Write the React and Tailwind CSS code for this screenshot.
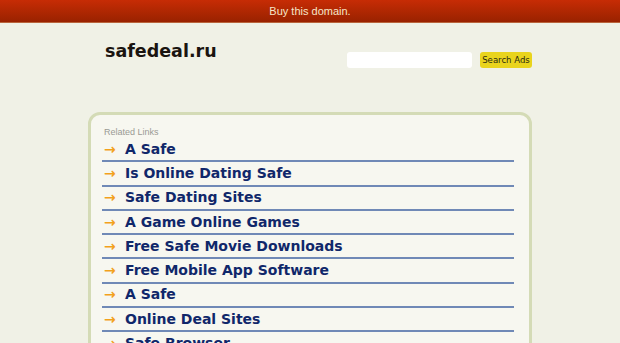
const links = [
  "A Safe",
  "Is Online Dating Safe",
  "Safe Dating Sites",
  "A Game Online Games",
  "Free Safe Movie Downloads",
  "Free Mobile App Software",
  "A Safe",
  "Online Deal Sites",
  "Safe Browser",
];

function App() {
  return (
    <div className="bg-[#f0f1e6] overflow-hidden h-[343px]">
      <div className="h-[23px] bg-gradient-to-b from-[#c72c05] to-[#992200] border-b border-[#b9653c] flex items-center justify-center">
        <span className="text-[11px] text-[#f6e6c8] font-['Liberation_Sans',sans-serif]">
          Buy this domain.
        </span>
      </div>

      <div className="w-[444px] mx-auto">
        <div className="flex items-start justify-between pl-[17px] pt-[16px] h-[89px]">
          <div className="text-[17.5px] font-bold text-[#1a1410] font-['DejaVu_Sans',sans-serif] leading-[24px]">
            safedeal.ru
          </div>
          <div className="flex items-center gap-[8px] mt-[13px]">
            <div className="w-[125px] h-[16px] bg-white rounded-[3px]"></div>
            <div className="w-[52px] h-[16px] bg-[#e9d41d] rounded-[3px] flex items-center justify-center text-[9.5px] text-[#2a2a10] font-['DejaVu_Sans_Condensed','DejaVu_Sans',sans-serif]">
              Search Ads
            </div>
          </div>
        </div>

        <div className="border-[3px] border-[#d4dbb6] rounded-[12px] bg-[#f7f7f0] pl-[11px] pr-[15px] pt-[11px] h-[260px]">
          <div className="text-[9px] text-[#9a9a94] pl-[2px] font-['Liberation_Sans',sans-serif] leading-[12px]">
            Related Links
          </div>
          {links.map((l, i) => (
            <div
              key={i}
              className="h-[24.3px] border-b-2 border-[#7089b6] flex items-center font-['DejaVu_Sans',sans-serif] font-bold"
            >
              <span className="w-[23px] pl-[2px] text-[#f2a11c] text-[14px]">→</span>
              <span className="text-[14px] text-[#10276a]">{l}</span>
            </div>
          ))}
        </div>
      </div>
    </div>
  );
}

export default App;
